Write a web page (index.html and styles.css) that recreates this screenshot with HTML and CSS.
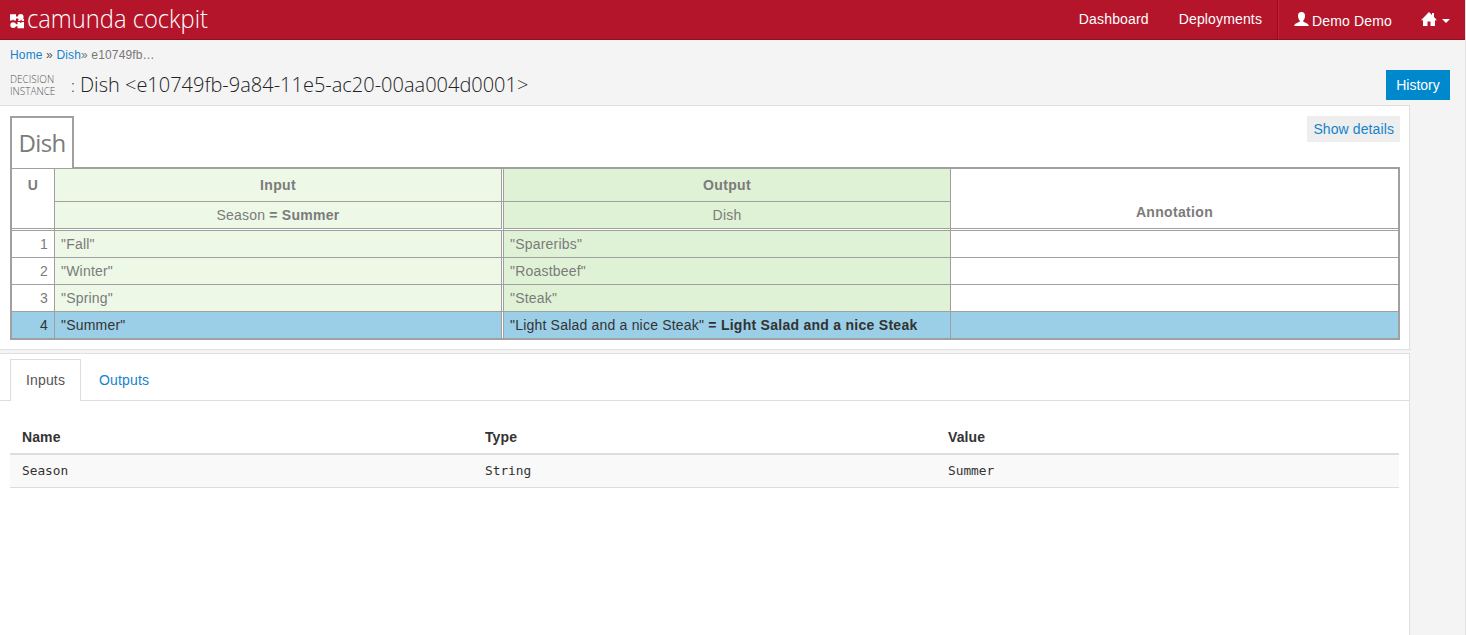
FILE: index.html
```html
<!DOCTYPE html>
<html lang="en">
<head>
<meta charset="utf-8">
<title>camunda cockpit</title>
<link rel="stylesheet" href="styles.css">
</head>
<body>
<header class="topbar">
  <a class="brand">
    <svg width="204" height="39" viewBox="0 0 204 39">
      <g fill="#fff">
        <path d="M0 14.200h6v2.300h2v2H6v2H4l-1-1-1 1H0z"/>
        <circle cx="10.700" cy="17" r="2.900"/>
        <circle cx="3.200" cy="25.100" r="2.900"/>
        <path d="M14 28.200H7.500v-2H5.500v-2h2V22h2l1.200 1 1.300-1h2z"/>
        <path d="M9 18.500h1.500V21H8zM12.500 19H14v2h-2.500z"/>
      </g>
      <text class="brand-text" x="17" y="28" textLength="181" lengthAdjust="spacingAndGlyphs">camunda cockpit</text>
    </svg>
  </a>
  <nav class="nav">
    <a class="dashboard">Dashboard</a>
    <a class="deployments">Deployments</a>
    <a class="user">
      <svg width="15" height="14" viewBox="0 0 15 14"><path fill="#fff" d="M7.500 0C5.200 0 3.900 1.500 4 4c.1 2 .8 3.700 1.700 4.600v1.200C4.500 10.600.5 11.300.2 13.900h14.600c-.3-2.600-4.300-3.300-5.500-4.100V8.600C10.200 7.700 10.900 6 11 4c.1-2.500-1.200-4-3.500-4z"/></svg>
      <span>Demo Demo</span>
    </a>
    <a class="home">
      <svg width="16" height="14" viewBox="0 0 16 14"><path fill="#fff" d="M8 0l3 3V1h2v4l3 3.200h-2V14H9.500V9.500h-3V14H2V8.200H0z"/></svg>
      <i class="caret"></i>
    </a>
  </nav>
</header>

<section class="page-head">
  <div class="crumbs"><a>Home</a> » <a>Dish</a><span>» e10749fb…</span></div>
  <div class="title-row">
    <div class="kind">DECISION<br>INSTANCE</div>
    <h1><span class="colon">:</span>Dish &lt;e10749fb-9a84-11e5-ac20-00aa004d0001&gt;</h1>
    <button class="history">History</button>
  </div>
</section>

<main>
  <section class="panel decision">
    <div class="decision-top">
      <div class="decision-name">Dish</div>
      <a class="details">Show details</a>
    </div>
    <div class="dmn">
      <div class="c hit">U</div>
      <div class="c in label">Input</div>
      <div class="c out label">Output</div>
      <div class="c note">Annotation</div>
      <div class="c in sub"><span>Season <b>= Summer</b></span></div>
      <div class="c out sub">Dish</div>

      <div class="c num">1</div><div class="c in">"Fall"</div><div class="c out">"Spareribs"</div><div class="c last"></div>
      <div class="c num">2</div><div class="c in">"Winter"</div><div class="c out">"Roastbeef"</div><div class="c last"></div>
      <div class="c num">3</div><div class="c in">"Spring"</div><div class="c out">"Steak"</div><div class="c last"></div>
      <div class="c num fired">4</div><div class="c in fired">"Summer"</div><div class="c out fired"><span>"Light Salad and a nice Steak" <b>= Light Salad and a nice Steak</b></span></div><div class="c last fired"></div>
    </div>
  </section>
  <div class="splitter"></div>
  <section class="panel variables">
    <div class="tabs"><a class="tab active">Inputs</a><a class="tab">Outputs</a></div>
    <div class="vars">
      <div class="vars-head"><span>Name</span><span>Type</span><span>Value</span></div>
      <div class="vars-row"><span>Season</span><span>String</span><span>Summer</span></div>
    </div>
  </section>
</main>
</body>
</html>
```

FILE: styles.css
```css
* { box-sizing: border-box; }
html { height: 100%; }
body {
  margin: 0;
  height: 100%;
  display: flex;
  flex-direction: column;
  overflow: hidden;
  background: #f4f4f4;
  border-right: 1px solid #e0e0e0;
  color: #333;
  font: 14px/20px "Liberation Sans", Arial, sans-serif;
}

.topbar {
  flex: none;
  height: 40px;
  display: flex;
  justify-content: space-between;
  background: #b5152b;
  border-bottom: 1px solid #8c1020;
  color: #fff;
}
.brand { padding-left: 10px; }
.brand svg { display: block; overflow: visible; }
.brand-text { font: 300 26px "Open Sans", sans-serif; fill: #fff; }
.nav { display: flex; letter-spacing: .15px; }
.nav a { display: flex; align-items: center; height: 39px; }
.nav .dashboard, .nav .deployments { padding-bottom: 2px; }
.deployments { padding: 0 15px 0 30px; border-right: 1px solid #8c1020; }
.user { gap: 3px; padding-left: 15px; border-left: 1px solid #d01c36; }
.user svg { margin-top: -1px; }
.user span { padding-top: 2px; }
.home { gap: 5px; padding: 0 15px 0 29px; }
.home svg { margin-top: -1px; }
.caret { border: 4px solid transparent; border-top-color: #fff; border-bottom: 0; margin-top: 3px; }

.page-head { flex: none; height: 65px; padding: 5px 15px 0 10px; }
.crumbs { font-size: 12px; line-height: 20px; letter-spacing: .15px; color: #555; }
.crumbs span { color: #777; }
.crumbs a, .details, .tab { color: #1583cc; }
.title-row { display: flex; align-items: flex-start; height: 35px; padding-top: 5px; }
.kind { width: 61px; margin-top: 3px; font: 300 10px/12px "Open Sans", sans-serif; color: #555; }
h1 { margin: 0; flex: 1; font: 300 20px/30px "Open Sans", sans-serif; color: #222; }
.colon { display: inline-block; width: 9px; font-size: 16px; }
.history {
  width: 64px; height: 30px; padding: 0; border: 0;
  background: #0088cc; color: #fff;
  font: 14px/30px "Liberation Sans", Arial, sans-serif;
}

main { flex: 1; display: flex; flex-direction: column; width: 1410px; min-height: 0; }
.panel { background: #fff; border-right: 1px solid #e0e0e0; border-top: 1px solid #e0e0e0; }
.decision { flex: none; height: 244px; padding: 10px 9px 0 10px; }
.splitter { flex: none; height: 4px; width: 1411px; border-top: 1px solid #e0e0e0; }
.variables { flex: 1; padding-top: 5px; }

.decision-top { display: flex; justify-content: space-between; align-items: flex-start; height: 51px; }
.decision-name {
  position: relative;
  width: 64px; height: 52px;
  border: 2px solid #a0a0a0; border-bottom: 0;
  background: #fff; color: #7b7b7b;
  text-align: center;
  font: 400 24px/50px "Open Sans", sans-serif;
  letter-spacing: -.7px;
}
.details { background: #eee; height: 26px; padding: 0 6px; line-height: 26px; letter-spacing: .1px; }

.dmn {
  display: grid;
  grid-template-columns: 43px 449px 447px 447px;
  grid-template-rows: 33px 29px 27px 27px 27px 26px;
  width: 1390px; height: 173px;
  border: 2px solid #a0a0a0;
  color: #7b7b7b;
  letter-spacing: .2px;
}
.c {
  display: flex; align-items: center;
  padding: 0 6px;
  border-right: 1px solid #a0a0a0;
  border-bottom: 1px solid #a0a0a0;
  background-clip: padding-box;
  white-space: pre;
}
.label, .hit, .note { font-weight: bold; letter-spacing: .33px; }
.c b { letter-spacing: .27px; }
.in { background-color: #edf8e7; border-right: 3px double #a0a0a0; }
.out { background-color: #dff2d5; }
.hit, .note { grid-row: span 2; border-bottom: 3px double #a0a0a0; justify-content: center; align-items: flex-start; }
.hit { padding-top: 6px; }
.note { padding-top: 33px; grid-column: 4; border-right: 0; }
.label, .sub { justify-content: center; }
.sub { border-bottom: 3px double #a0a0a0; }
.num { justify-content: flex-end; }
.last { border-right: 0; }
.fired { background-color: #9bcfe8; color: #333; border-bottom: 0; }

.tabs { display: flex; height: 42px; padding-left: 10px; border-bottom: 1px solid #ddd; }
.tab { padding: 0 18px; line-height: 42px; letter-spacing: .15px; }
.tab.active { position: relative; width: 71px; height: 42px; padding: 0 15px; line-height: 40px; border: 1px solid #ddd; border-bottom: 0; background: #fff; color: #555; }

.vars { margin: 18px 10px 0 10px; width: 1389px; }
.vars-head, .vars-row { display: grid; grid-template-columns: 463px 463px 463px; }
.vars span { padding-left: 12px; }
.vars-head { height: 36px; line-height: 36px; font-weight: bold; letter-spacing: .1px; border-bottom: 2px solid #ddd; }
.vars-row { height: 33px; line-height: 31px; background: #f9f9f9; border-bottom: 1px solid #ddd; font-family: "DejaVu Sans Mono", monospace; font-size: 12.8px; }
```
